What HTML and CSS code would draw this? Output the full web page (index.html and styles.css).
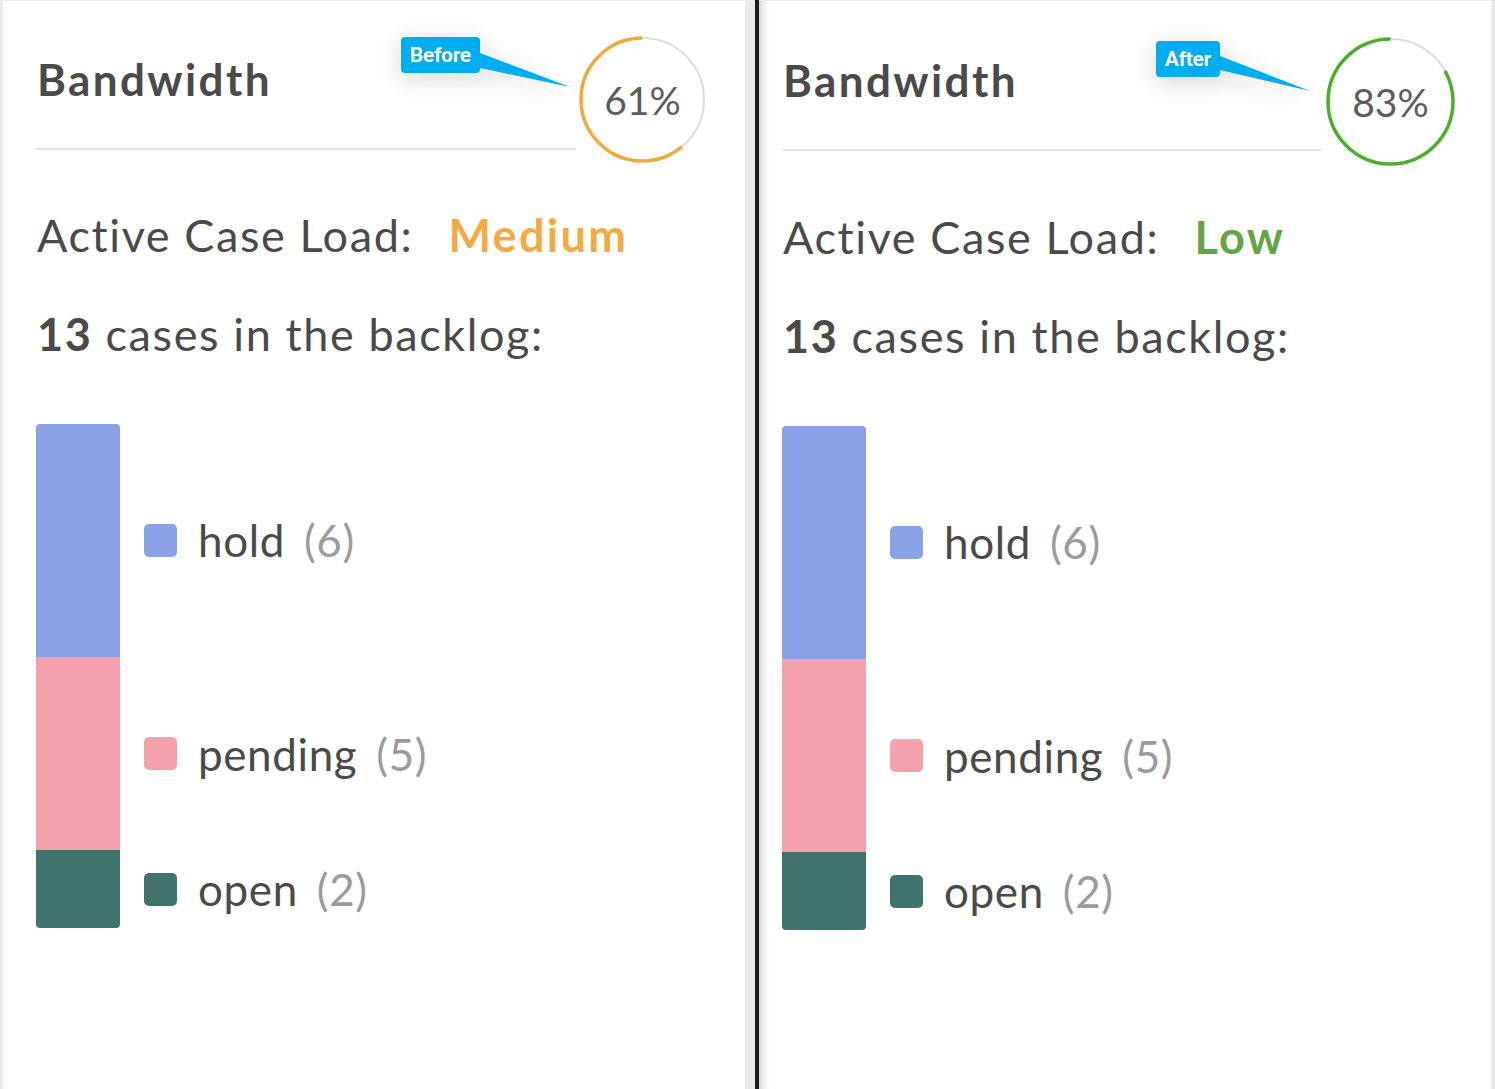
FILE: index.html
```html
<!DOCTYPE html>
<html lang="en">
<head>
<meta charset="utf-8">
<title>Bandwidth – Before / After</title>
<link rel="stylesheet" href="styles.css">
</head>
<body>
<div class="page">
  <section class="panel panel-before">
    <div class="note note-before">
      <span class="note-label">Before</span>
      <svg class="note-tail" width="92" height="52" viewBox="0 0 92 52"><polygon points="0,16 0,31 90,50" fill="#00aeef"/></svg>
    </div>
    <header class="head">
      <h1 class="title">Bandwidth</h1>
      <div class="gauge">
        <svg width="127" height="127" viewBox="0 0 127 127">
          <circle cx="63.5" cy="63.5" r="61.5" fill="none" stroke="#dcdcdc" stroke-width="2"/>
          <circle class="arc arc-orange" cx="63.5" cy="63.5" r="61.5" fill="none" stroke-width="3.5" stroke-dasharray="235.7 400" transform="translate(127 0) scale(-1 1) rotate(-90 63.5 63.5)"/>
        </svg>
        <span class="gauge-value">61%</span>
      </div>
    </header>
    <p class="load">Active Case Load: <strong class="level level-medium">Medium</strong></p>
    <p class="backlog"><strong>13</strong> cases in the backlog:</p>
    <div class="chart">
      <div class="seg seg-hold seg-first"></div>
      <div class="legend"><span class="sw sw-hold"></span><span class="lbl">hold</span><span class="cnt">(6)</span></div>
      <div class="seg seg-pending"></div>
      <div class="legend"><span class="sw sw-pending"></span><span class="lbl">pending</span><span class="cnt">(5)</span></div>
      <div class="seg seg-open seg-last"></div>
      <div class="legend"><span class="sw sw-open"></span><span class="lbl">open</span><span class="cnt">(2)</span></div>
    </div>
  </section>

  <div class="divider"></div>

  <section class="panel panel-after">
    <div class="note note-after">
      <span class="note-label">After</span>
      <svg class="note-tail" width="92" height="52" viewBox="0 0 92 52"><polygon points="0,15 0,29 90,50" fill="#00aeef"/></svg>
    </div>
    <header class="head">
      <h1 class="title">Bandwidth</h1>
      <div class="gauge gauge-lg">
        <svg width="129" height="129" viewBox="0 0 129 129">
          <circle cx="64.5" cy="64.5" r="62.5" fill="none" stroke="#dcdcdc" stroke-width="2"/>
          <circle class="arc arc-green" cx="64.5" cy="64.5" r="62.5" fill="none" stroke-width="3.5" stroke-dasharray="326 400" transform="translate(129 0) scale(-1 1) rotate(-90 64.5 64.5)"/>
        </svg>
        <span class="gauge-value">83%</span>
      </div>
    </header>
    <p class="load">Active Case Load: <strong class="level level-low">Low</strong></p>
    <p class="backlog"><strong>13</strong> cases in the backlog:</p>
    <div class="chart">
      <div class="seg seg-hold seg-first"></div>
      <div class="legend"><span class="sw sw-hold"></span><span class="lbl">hold</span><span class="cnt">(6)</span></div>
      <div class="seg seg-pending"></div>
      <div class="legend"><span class="sw sw-pending"></span><span class="lbl">pending</span><span class="cnt">(5)</span></div>
      <div class="seg seg-open seg-last"></div>
      <div class="legend"><span class="sw sw-open"></span><span class="lbl">open</span><span class="cnt">(2)</span></div>
    </div>
  </section>
</div>
</body>
</html>
```

FILE: styles.css
```css
* { box-sizing: border-box; }

html, body {
  margin: 0;
  padding: 0;
}

body {
  background: #ebebeb;
  font-family: Lato, "Open Sans", "Liberation Sans", sans-serif;
  color: #4a4a4a;
  overflow: hidden;
}

.page {
  display: flex;
  height: 1089px;
  padding: 1px 0 0 3px;
}

.panel {
  position: relative;
  background: #fff;
  height: 100%;
}

.panel-before {
  width: 742px;
  padding: 35px 39px 0 33px;
}

.divider {
  width: 4px;
  margin-left: 10px;
  margin-top: -1px;
  background: #1c1c1c;
}

.panel-after {
  width: 732px;
  padding: 36px 36px 0 23px;
  box-shadow: inset 10px 0 10px -8px rgba(0, 0, 0, 0.22);
}

/* header */
.head {
  display: flex;
  align-items: flex-start;
  gap: 3px;
}

.panel-after .head { gap: 4px; }

.title {
  width: 540px;
  margin: 0;
  padding: 21px 0 0 1px;
  height: 114px;
  border-bottom: 2px solid #e4e4e4;
  font-size: 44px;
  line-height: 44px;
  font-weight: 700;
  letter-spacing: 2.4px;
  color: #4a4a4a;
}

.gauge {
  position: relative;
  width: 127px;
  height: 127px;
  flex: none;
}

.gauge-lg {
  width: 129px;
  height: 129px;
}

.gauge svg { display: block; }

.arc-orange { stroke: #f0a93a; }
.arc-green { stroke: #4caf2c; }

.gauge-value {
  position: absolute;
  inset: 0;
  display: flex;
  align-items: center;
  justify-content: center;
  font-size: 39px;
  font-weight: 400;
  color: #5c5c5c;
  padding-top: 1px;
}

/* text lines */
.load, .backlog {
  margin: 0;
  padding-left: 1px;
  font-size: 45px;
  line-height: 54px;
  font-weight: 400;
  letter-spacing: 1.6px;
  color: #4a4a4a;
}

.load { margin-top: 45px; }
.backlog { margin-top: 45px; }

.panel-after .load { margin-top: 44px; }

.backlog strong { font-weight: 700; }

.level {
  font-weight: 700;
  margin-left: 22px;
  letter-spacing: 2.3px;
}

.level-medium { color: #f2ab42; }
.level-low { color: #64a447; }

/* chart */
.chart {
  display: grid;
  grid-template-columns: 84px 1fr;
  grid-template-rows: 6fr 5fr 2fr;
  column-gap: 24px;
  height: 504px;
  margin-top: 63px;
}

.seg { width: 84px; }
.seg-first { border-radius: 4px 4px 0 0; }
.seg-last { border-radius: 0 0 4px 4px; }

.seg-hold, .sw-hold { background: #8aa1e5; }
.seg-pending, .sw-pending { background: #f3a1ac; }
.seg-open, .sw-open { background: #41736e; }

.legend {
  display: flex;
  align-items: center;
  font-size: 44px;
  letter-spacing: 0.6px;
  color: #4a4a4a;
}

.sw {
  width: 33px;
  height: 33px;
  border-radius: 5px;
  flex: none;
  margin-right: 21px;
}

.cnt {
  margin-left: 19px;
  color: #9b9b9b;
}

/* annotations */
.note {
  position: absolute;
  filter: drop-shadow(0 5px 12px rgba(0, 0, 0, 0.16));
  z-index: 2;
}

.note-before { left: 398px; top: 36px; }
.note-after { left: 397px; top: 40px; }

.note-label {
  display: block;
  height: 36px;
  padding: 0 9px;
  background: #00aeef;
  border-radius: 4px;
  font-family: Roboto, "Liberation Sans", sans-serif;
  font-weight: 700;
  font-size: 21px;
  line-height: 37px;
  color: #fff;
  letter-spacing: -0.3px;
}

.note-tail {
  position: absolute;
  left: 100%;
  top: 0;
  display: block;
}
```
